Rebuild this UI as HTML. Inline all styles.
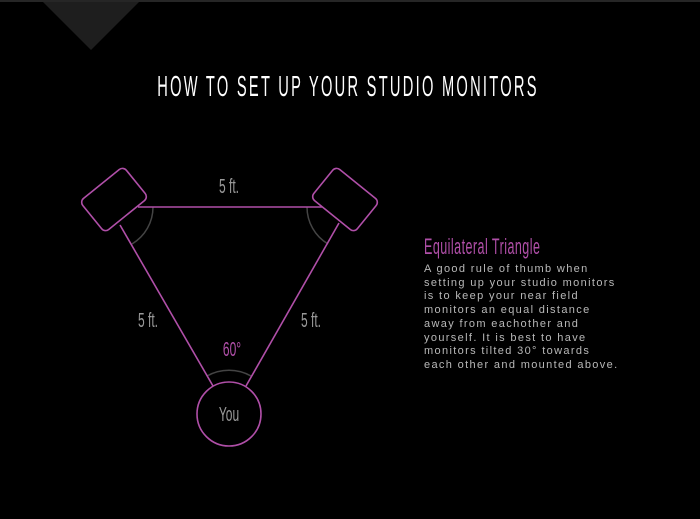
<!DOCTYPE html>
<html><head><style>
html,body{margin:0;padding:0;background:#000;width:700px;height:519px;overflow:hidden}
.t{position:absolute;left:0;top:0}
.body{position:absolute;left:424px;top:263px;white-space:nowrap;font-family:"Liberation Sans",sans-serif;font-size:11px;line-height:13.7px;color:#b8b8b8;letter-spacing:1.35px;}
</style></head><body>
<svg class="t" width="700" height="519" viewBox="0 0 700 519">
<rect x="0" y="0" width="700" height="2" fill="#262626"/>
<polygon points="43,2 139,2 91,50" fill="#1e1e1e"/>
<text fill="#fff" font-family="Liberation Sans,sans-serif" font-size="29" text-anchor="middle" letter-spacing="4.5" transform="translate(348 96) scale(0.505 1)">HOW TO SET UP YOUR STUDIO MONITORS</text>
<g fill="none" stroke="#444" stroke-width="1.5">
<path d="M153,207 A43,43 0 0 1 132,244"/>
<path d="M307,207 A43,43 0 0 0 328,244"/>
<path d="M207,376 A45,45 0 0 1 251,376"/>
</g>
<g fill="none" stroke="#b04fa8" stroke-width="1.6">
<line x1="138" y1="207" x2="322" y2="207"/>
<line x1="120" y1="225" x2="213" y2="386"/>
<line x1="339" y1="223" x2="246" y2="386"/>
<circle cx="229" cy="414" r="32"/>
<rect x="-28" y="-20" width="56" height="40" rx="5" transform="translate(114 199.5) rotate(-39)"/>
<rect x="-28" y="-20" width="56" height="40" rx="5" transform="translate(345 199.5) rotate(39)"/>
</g>
<g font-family="Liberation Sans,sans-serif" font-size="20" text-anchor="middle">
<text fill="#9a9a9a" transform="translate(229 193) scale(0.6 1)">5 ft.</text>
<text fill="#9a9a9a" transform="translate(148 327) scale(0.6 1)">5 ft.</text>
<text fill="#9a9a9a" transform="translate(311 327) scale(0.6 1)">5 ft.</text>
<text fill="#b04fa8" transform="translate(232 356) scale(0.6 1)">60°</text>
<text fill="#9a9a9a" transform="translate(229 421) scale(0.6 1)">You</text>
<text fill="#b04fa8" font-size="22" text-anchor="start" transform="translate(424 254) scale(0.57 1)" letter-spacing="0.8">Equilateral Triangle</text>
</g>
</svg>
<div class="body">A good rule of thumb when<br>setting up your studio monitors<br>is to keep your near field<br>monitors an equal distance<br>away from eachother and<br>yourself. It is best to have<br>monitors tilted 30° towards<br>each other and mounted above.</div>
</body></html>
